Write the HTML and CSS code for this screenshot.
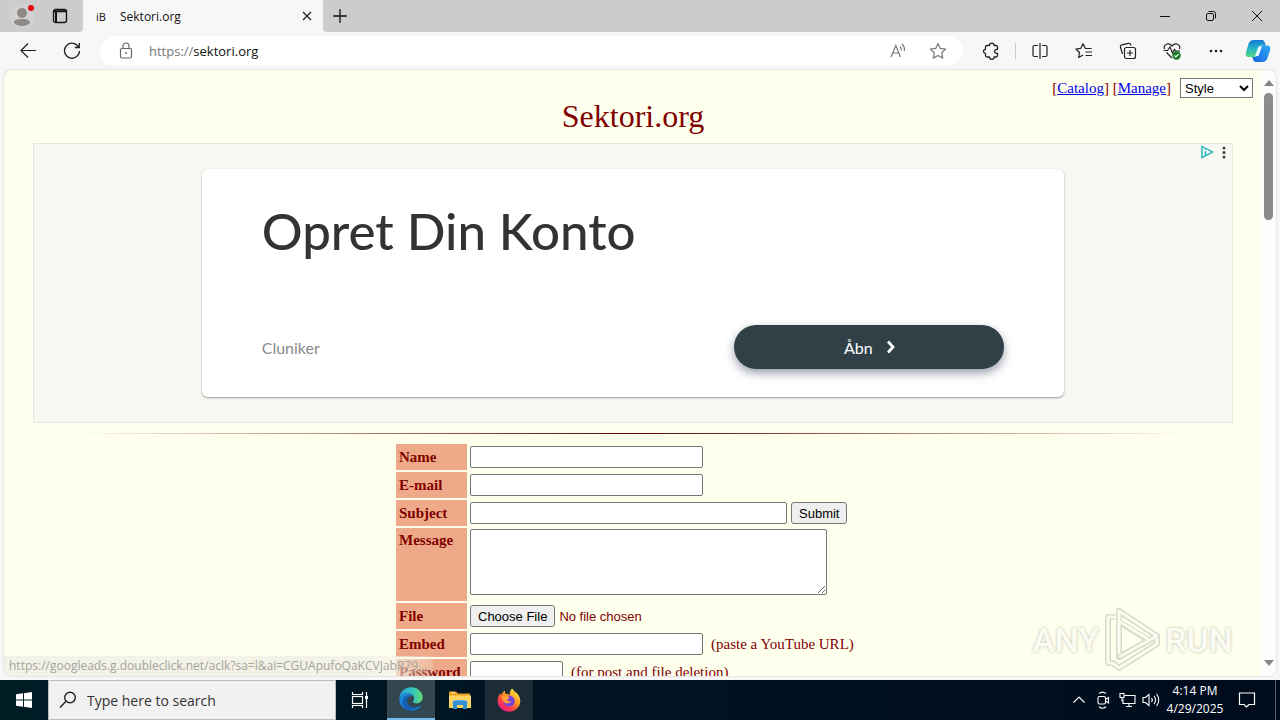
FILE: index.html
```html
<!DOCTYPE html>
<html lang="en">
<head>
	<meta charset="UTF-8">
	<meta name="viewport" content="width=device-width, initial-scale=1.0">
	<title>Sektori.org</title>
	<link rel="stylesheet" href="styles.css">
</head>
<body>

	<!-- tab strip -->
	<header class="tabstrip">
		<div class="tabstrip-left">
			<button class="profile" aria-label="Profile">
				<svg width="28" height="28" viewBox="0 0 28 28"><circle cx="14" cy="14" r="12" fill="#d2d2d2"/><circle cx="14" cy="11" r="5" fill="#8d8a88"/><path d="M6 20.500c0-2.500 3-3.500 8-3.500s8 1 8 3.500c-1 2-4 3.500-8 3.500s-7-1.500-8-3.500z" fill="#8d8a88"/><circle cx="23" cy="6" r="3" fill="#e30613"/></svg>
			</button>
			<button class="tab-actions" aria-label="Tab actions">
				<svg width="16" height="16" viewBox="0 0 16 16" fill="none" stroke="#111" stroke-width="1.3"><rect x="1.5" y="1.5" width="13" height="13" rx="2"/><path d="M1.500 3.200h13M4 4v10.500" stroke-width="2"/></svg>
			</button>
		</div>
		<div class="tab">
			<span class="favicon">iB</span>
			<span class="tab-title">Sektori.org</span>
			<button class="tab-close" aria-label="Close tab">
				<svg width="10" height="10" viewBox="0 0 10 10" stroke="#222" stroke-width="1.3"><path d="M1 1l8 8M9 1l-8 8"/></svg>
			</button>
		</div>
		<div class="tabstrip-rest">
			<button class="new-tab" aria-label="New tab">
				<svg width="14" height="14" viewBox="0 0 14 14" stroke="#111" stroke-width="1.3"><path d="M7 0v14M0 7h14"/></svg>
			</button>
			<div class="win-controls">
				<button aria-label="Minimize"><svg width="12" height="12" viewBox="0 0 12 12"><path d="M1 6.500h10" stroke="#111"/></svg></button>
				<button aria-label="Restore"><svg width="12" height="12" viewBox="0 0 12 12" fill="none" stroke="#111"><rect x="1.500" y="3.500" width="7" height="7" rx="1.500"/><path d="M3.500 1.500h5a2 2 0 0 1 2 2v5"/></svg></button>
				<button aria-label="Close"><svg width="12" height="12" viewBox="0 0 12 12" stroke="#111"><path d="M1 1l10 10M11 1L1 11"/></svg></button>
			</div>
		</div>
	</header>

	<!-- toolbar -->
	<nav class="toolbar">
		<button class="tool" aria-label="Back"><svg width="18" height="18" viewBox="0 0 18 18" fill="none" stroke="#222" stroke-width="1.2"><path d="M17 8.500H2M9 1.500L2 8.500l7 7"/></svg></button>
		<button class="tool" aria-label="Refresh"><svg width="18" height="18" viewBox="0 0 18 18" fill="none" stroke="#222" stroke-width="1.3"><path d="M15.800 5.500A7.500 7.500 0 1 0 16.500 9M16.300 1v4.500h-4.500"/></svg></button>
		<div class="address">
			<svg width="14" height="18" viewBox="0 0 14 18" fill="none" stroke="#666" stroke-width="1.2"><rect x="1.500" y="6.500" width="11" height="9.500" rx="1.500"/><path d="M4 6.500V4a3 3 0 0 1 6 0v2.500"/><circle cx="7" cy="11" r="1" fill="#666" stroke="none"/></svg>
			<a class="url" href="https://sektori.org"><span>https://</span>sektori.org</a>
			<button aria-label="Read aloud"><svg width="18" height="18" viewBox="0 0 18 18" fill="none" stroke="#777" stroke-width="1.2"><path d="M2 15L6.800 3.500 11.500 15M3.700 11h6.200M11 4.500c1 1 1.500 2.500 1.300 4M13 2c2 2 2.800 4.500 2.300 7"/></svg></button>
			<button aria-label="Add to favorites"><svg width="18" height="18" viewBox="0 0 18 18" fill="none" stroke="#777" stroke-width="1.2"><path d="M9 1.500l2.300 4.900 5.300.7-3.900 3.700 1 5.300L9 13.500l-4.700 2.600 1-5.300L1.400 7.100l5.300-.7z" stroke-linejoin="round"/></svg></button>
		</div>
		<button class="tool" aria-label="Extensions"><svg width="18" height="18" viewBox="0 0 18 18" fill="none" stroke="#222" stroke-width="1.3" stroke-linejoin="round"><path d="M5 3.500h2.500a2.300 2.300 0 0 1 4.600 0H14a1.500 1.500 0 0 1 1.500 1.500v2.300h-.8a2 2 0 0 0 0 4h.8v2.200A1.500 1.500 0 0 1 14 15h-1.900a2.300 2.300 0 0 1-4.600 0H5a1.500 1.500 0 0 1-1.500-1.500v-2.200a2 2 0 0 1 0-4V5A1.500 1.500 0 0 1 5 3.500z"/></svg></button>
		<span class="tool-divider"></span>
		<button class="tool" aria-label="Split screen"><svg width="18" height="18" viewBox="0 0 18 18" fill="none" stroke="#222" stroke-width="1.2"><path d="M9 1v16M7 3.500H3.500a1.500 1.500 0 0 0-1.500 1.500v8a1.500 1.500 0 0 0 1.500 1.500H7M11 3.500h3.500A1.500 1.500 0 0 1 16 5v8a1.500 1.500 0 0 1-1.500 1.500H11"/></svg></button>
		<button class="tool" aria-label="Favorites"><svg width="18" height="18" viewBox="0 0 18 18" fill="none" stroke="#222" stroke-width="1.2"><path d="M16.500 6.500h-6L8 1.800 5.800 6.300.9 7l3.600 3.500-.8 5L8 13M10.500 10H17M10.500 13.500H17" stroke-linejoin="round"/></svg></button>
		<button class="tool" aria-label="Collections"><svg width="18" height="18" viewBox="0 0 18 18" fill="none" stroke="#222" stroke-width="1.2"><rect x="5.500" y="5.500" width="11" height="11" rx="2"/><path d="M11 8v6M8 11h6M3.500 12L1.400 5A2 2 0 0 1 2.800 2.800L9.500 1.400a2 2 0 0 1 2.300 1.400l.2.800"/></svg></button>
		<button class="tool" aria-label="Browser essentials"><svg width="18" height="18" viewBox="0 0 18 18" fill="none" stroke="#222" stroke-width="1.2"><path d="M1.500 7C0 2.500 5.500 0 9 4c3.500-4 9-1.500 7.500 3M3.500 10.500L9 16M.5 8.500h4L7 5l2.500 6 2-3.500 1 1.500H17"/><circle cx="13.500" cy="13.500" r="4.200" fill="#187a24" stroke="none"/><path d="M11.500 13.500l1.400 1.400 2.600-2.700" stroke="#fff"/></svg></button>
		<button class="tool" aria-label="Settings and more"><svg width="16" height="4" viewBox="0 0 16 4" fill="#222"><circle cx="3" cy="2" r="1.300"/><circle cx="8" cy="2" r="1.300"/><circle cx="13" cy="2" r="1.300"/></svg></button>
		<button class="tool copilot" aria-label="Copilot">
			<svg width="26" height="24" viewBox="0 0 26 24">
				<defs>
					<linearGradient id="cop1" x1="0" y1="0" x2="0" y2="1"><stop offset="0" stop-color="#1479d6"/><stop offset=".5" stop-color="#27b4c8"/><stop offset="1" stop-color="#58d878"/></linearGradient>
					<linearGradient id="cop2" x1="0" y1="1" x2="1" y2="0"><stop offset="0" stop-color="#1a63e0"/><stop offset="1" stop-color="#2ba8f4"/></linearGradient>
				</defs>
				<path d="M9 1h8c2 0 2.500 1.500 3 3l.8 2.500H17c-2 0-3 1-3.600 3l-1.900 6c-.6 2-1.500 2.500-3 2.500H4c-3 0-3.800-2-3-5L3.500 5C4.300 2.500 6 1 9 1z" fill="url(#cop1)"/>
				<path d="M17.500 6.500H22c3 0 3.800 2 3 5L22.500 19c-.8 2.500-2.500 4-5.500 4h-6c-2 0-2.600-1.500-3-3L7 18h2c2 0 3-.9 3.600-2.700l2-6c.5-1.800 1.200-2.800 2.900-2.800z" fill="url(#cop2)"/>
				<path d="M13.500 7.500h3.500L13.500 17H10z" fill="#e6f7ff"/>
			</svg>
		</button>
	</nav>

	<!-- page -->
	<div class="viewport">
		<main class="page">
			<div class="boardlist">
				<span>[<a href="catalog.html">Catalog</a>] [<a href="manage.html">Manage</a>]</span>
				<select aria-label="Style"><option>Style</option></select>
			</div>
			<h1 class="logo">Sektori.org</h1>

			<div class="ad">
				<div class="ad-marks">
					<svg width="14" height="14" viewBox="0 0 14 14" fill="none" stroke="#18b3bd" stroke-width="1.400"><path d="M2 1.500l10.500 5.500L2 12.500z"/><path d="M5.500 6v4M5.500 3.800v1"/></svg>
					<svg width="4" height="14" viewBox="0 0 4 14" fill="#444"><circle cx="2" cy="3" r="1.500"/><circle cx="2" cy="7.500" r="1.500"/><circle cx="2" cy="12" r="1.500"/></svg>
				</div>
				<div class="ad-card">
					<h2>Opret Din Konto</h2>
					<div class="ad-bottom">
						<span>Cluniker</span>
						<a class="ad-button" href="https://googleads.g.doubleclick.net/aclk">Åbn
							<svg width="8" height="14" viewBox="0 0 8 14" fill="none" stroke="#fff" stroke-width="2.800"><path d="M1 1.500L6 7l-5 5.500"/></svg>
						</a>
					</div>
				</div>
			</div>

			<hr>

			<form class="postform">
				<table>
					<tr>
						<th><label for="name">Name</label></th>
						<td><input type="text" id="name" class="medium"></td>
					</tr>
					<tr>
						<th><label for="email">E-mail</label></th>
						<td><input type="text" id="email" class="medium"></td>
					</tr>
					<tr>
						<th><label for="subject">Subject</label></th>
						<td><div class="field"><input type="text" id="subject" class="long"><button type="button" class="submit">Submit</button></div></td>
					</tr>
					<tr class="message">
						<th><label for="message">Message</label></th>
						<td><textarea id="message"></textarea></td>
					</tr>
					<tr>
						<th><label for="file">File</label></th>
						<td><input type="file" id="file"></td>
					</tr>
					<tr>
						<th><label for="embed">Embed</label></th>
						<td><div class="field wide"><input type="text" id="embed" class="medium"><span>(paste a YouTube URL)</span></div></td>
					</tr>
					<tr>
						<th><label for="password">Password</label></th>
						<td><div class="field wide"><input type="password" id="password" class="short"><span>(for post and file deletion)</span></div></td>
					</tr>
				</table>
			</form>
		</main>
		<div class="scrollbar">
			<svg width="10" height="6" viewBox="0 0 10 6"><path d="M5 0l5 6H0z" fill="#858585"/></svg>
			<div class="thumb"></div>
			<svg width="10" height="6" viewBox="0 0 10 6"><path d="M5 6l5-6H0z" fill="#858585"/></svg>
		</div>

		<div class="status">https://googleads.g.doubleclick.net/aclk?sa=l&amp;ai=CGUApufoQaKCVJabR79...</div>

		<div class="watermark">
			<span>ANY</span>
			<svg width="58" height="64" viewBox="0 0 58 64" fill="none" stroke-linejoin="round">
				<path d="M12 9H5v46h5l6 5 38-24v-8L16 3v46l38-21M16 14l28 17" stroke="#d0d0c2" stroke-width="6"/>
				<path d="M12 9H5v46h5M16 46V3l38 25-38 21M17 14l28 17M10 55l6 5 38-24v-6" stroke="#fbfbf4" stroke-width="3"/>
			</svg>
			<span>RUN</span>
		</div>
	</div>

	<!-- taskbar -->
	<footer class="taskbar">
		<button class="start" aria-label="Start"><svg width="16" height="16" viewBox="0 0 16 16" fill="#fff"><path d="M0 2.300l7-1v6.200H0zM8 1.200L16 0v7.500H8zM0 8.500h7v6.200l-7-1zM8 8.500h8V16l-8-1.200z"/></svg></button>
		<label class="search">
			<svg width="18" height="18" viewBox="0 0 18 18" fill="none" stroke="#222" stroke-width="1.400"><circle cx="11" cy="6.500" r="5.300"/><path d="M7 10.300L1 16.500"/></svg>
			<input type="text" placeholder="Type here to search">
		</label>
		<button class="task" aria-label="Task view"><svg width="18" height="18" viewBox="0 0 18 18" fill="none" stroke="#fff" stroke-width="1.200"><path d="M1.500 1v2.500h10V1M1.500 17v-2.500h10V17M15.500 1v16"/><rect x="1.500" y="5.500" width="10" height="7"/><path d="M14 5h3v3h-3z" fill="#fff" stroke="none"/></svg></button>
		<div class="pinned">
			<button class="task active" aria-label="Edge">
				<svg width="24" height="24" viewBox="0 0 24 24">
					<defs>
						<linearGradient id="edge1" x1="0" y1="0" x2="1" y2="0"><stop offset="0" stop-color="#22a5df"/><stop offset=".6" stop-color="#35c5b8"/><stop offset="1" stop-color="#5fdc72"/></linearGradient>
						<linearGradient id="edge2" x1="0" y1="0" x2="0" y2="1"><stop offset="0" stop-color="#1d8fdb"/><stop offset="1" stop-color="#1377d4"/></linearGradient>
					</defs>
					<path d="M.300 11C1.200 4.500 6 .3 12 .3c7 0 11.700 5 11.700 10 0 3.500-2.600 6-6 6-2.500 0-3.700-.8-3.700-1.600 0-.8 1.200-1.200 1.200-3.200C15.200 8.600 12 6.300 8.300 6.300 4.500 6.300 1.300 8.300.300 11z" fill="url(#edge1)"/>
					<path d="M.300 11c1-2.800 4.200-4.700 8-4.700 2.400 0 4.200 1 5.200 2.200-2.500-.3-5.500 2-5.500 5.500 0 4.500 4.500 7.500 9 6.500 1.600-.3 3-1 4.400-1.800.5-.2.800.2.500.6-2 2.900-5.500 4.500-9.900 4.500C5.500 23.800-.500 18.500.300 11z" fill="url(#edge2)"/>
					<path d="M13.500 8.500C11 8 8 10.500 8 14c0 4.500 4.500 7.500 9 6.500-3.500 3-8.500 3.500-11.500.5-3.500-3.500-2.500-10.500 2-12.500 2.500-1.200 5-.8 6 0z" fill="#1557a8" opacity=".75"/>
				</svg>
			</button>
			<button class="task" aria-label="File Explorer"><svg width="22" height="20" viewBox="0 0 22 20"><path d="M0 1.500h7l2 2h12v5H0z" fill="#e8a11d"/><path d="M2 2.800h4" stroke="#fff2c4"/><path d="M0 5.500h22V18H0z" fill="#ffd462"/><path d="M4 19v-6.500A2 2 0 0 1 6 10.500h10a2 2 0 0 1 2 2V19h-4v-4H8v4z" fill="#368fd0"/><path d="M4 14.500v-2A2 2 0 0 1 6 10.500h10a2 2 0 0 1 2 2v2" fill="none" stroke="#5fb0e6"/></svg></button>
			<button class="task open" aria-label="Firefox">
				<svg width="24" height="24" viewBox="0 0 24 24">
					<defs>
						<linearGradient id="fox" x1=".85" y1=".05" x2=".2" y2=".95"><stop offset="0" stop-color="#fff04a"/><stop offset=".4" stop-color="#ff9a1f"/><stop offset=".7" stop-color="#ff4444"/><stop offset="1" stop-color="#e31587"/></linearGradient>
					</defs>
					<path d="M15 .5c1.500 1.200 2.500 2.800 3 4.500 0-.700 0-1.300-.2-1.800C21 5.500 23.500 9.500 23.300 13.500 23 19.300 18 23.700 12 23.700S.600 19.200.6 13c0-3.200 1.200-6 3-7.800 0 1 .2 1.700.5 2.200.8-2.200 2.200-4 3.900-5-.3 1.200 0 2.500.8 3.600 2 .3 3.200.3 4.200 1.200C12.500 5 13.200 2.500 15 .5z" fill="url(#fox)"/>
					<path d="M12 7.500c3 0 5.700 2.300 5.700 5.500S15 18.500 12 18.500 6.500 16.200 6.500 13c0-1 .4-2 1-2.700 1 .4 2 .3 3-.1z" fill="#7542e5"/>
					<path d="M5 8.500c2-1 4-.8 5.500.5h2.200c-.4 1.500-2.200 1.800-2.400 2.700 0 1.800 2.700 2.300 4.200.8-.8 3-4.500 4-7 2C6 13 5 11 5 8.500z" fill="#ffa032"/>
				</svg>
			</button>
		</div>

		<div class="tray">
			<button aria-label="Show hidden icons"><svg width="12" height="12" viewBox="0 0 12 12" fill="none" stroke="#fff" stroke-width="1.200"><path d="M.500 8.500L6 3l5.500 5.500"/></svg></button>
			<button aria-label="Meet now"><svg width="14" height="18" viewBox="0 0 14 18" fill="none" stroke="#fff" stroke-width="1.100"><rect x="2" y="5.500" width="7.500" height="7.500" rx="1.500"/><path d="M9.500 8.500l3-2v5.500l-3-2M3 2.500c2-1.600 5-1.600 7 0M3 15.800c2 1.600 5 1.600 7 0"/></svg></button>
			<button aria-label="Network"><svg width="17" height="16" viewBox="0 0 17 16" fill="none" stroke="#fff" stroke-width="1.100"><path d="M5.500 3.500h10.500v8H4V7M7 14.500h6M10 11.500v3"/><rect x="1" y="1.500" width="4" height="4"/><path d="M3 5.500v4"/></svg></button>
			<button aria-label="Volume"><svg width="18" height="16" viewBox="0 0 18 16" fill="none" stroke="#fff" stroke-width="1.100"><path d="M1 5.500h2.500L7 2.500v11L3.500 10.500H1zM9.500 6c1 1.200 1 2.800 0 4M12 4c2 2.500 2 5.500 0 8M14.500 2c3 3.500 3 8.500 0 12"/></svg></button>
			<div class="clock"><span>4:14 PM</span><span>4/29/2025</span></div>
			<button class="notify" aria-label="Notifications"><svg width="18" height="18" viewBox="0 0 18 18" fill="none" stroke="#fff" stroke-width="1.200"><path d="M1.500 2h15v11.500H11L8.500 16 6 13.500H1.500z"/></svg></button>
			<span class="show-desktop"></span>
		</div>
	</footer>

</body>
</html>
```

FILE: styles.css
```css
* {
	box-sizing: border-box;
}

body {
	margin: 0;
	height: 100vh;
	display: flex;
	flex-direction: column;
	overflow: hidden;
	background: #f7f7f7;
	font-family: "Open Sans", "Noto Sans", sans-serif;
	font-size: 12px;
	color: #111;
}

header button,
nav button,
footer button {
	display: flex;
	align-items: center;
	justify-content: center;
	border: 0;
	padding: 0;
	background: none;
}

/* Tab strip */
.tabstrip {
	display: flex;
	height: 32px;
	flex-shrink: 0;
}

.tabstrip-left {
	display: flex;
	align-items: center;
	width: 83px;
	background: #ccc;
	border-radius: 0 0 4px 0;
}

.profile {
	width: 44px;
}

.tab-actions {
	width: 32px;
}

.tab {
	display: flex;
	align-items: center;
	width: 240px;
	padding: 0 8px 0 13px;
}

.favicon {
	width: 24px;
	font-size: 11px;
}

.tab-title {
	flex: 1;
}

.tab-close {
	width: 16px;
	height: 16px;
}

.tabstrip-rest {
	flex: 1;
	display: flex;
	justify-content: space-between;
	background: #ccc;
	border-radius: 0 0 0 4px;
}

.new-tab {
	width: 34px;
}

.win-controls {
	display: flex;
}

.win-controls button {
	width: 46px;
}

/* Toolbar */
.toolbar {
	display: flex;
	align-items: center;
	height: 38px;
	flex-shrink: 0;
	padding: 0 2px 0 6px;
}

.tool {
	width: 44px;
	height: 30px;
}

.address {
	flex: 1;
	display: flex;
	align-items: center;
	height: 30px;
	margin: 0 6px;
	padding: 0 5px 0 19px;
	border-radius: 15px;
	background: #fff;
}

.address button {
	width: 40px;
	height: 30px;
}

.url {
	flex: 1;
	margin-left: 16px;
	font-size: 13px;
	color: #111;
	text-decoration: none;
}

.url span {
	color: #777;
}

.tool-divider {
	width: 1px;
	height: 16px;
	margin: 0 2px;
	background: #ccc;
}

.copilot {
	width: 40px;
}

/* Page area */
.viewport {
	position: relative;
	flex: 1;
	min-height: 0;
	display: flex;
	margin: 0 4px 4px;
	overflow: hidden;
	border-radius: 8px;
	background: #ffe;
	box-shadow: 0 0 2px #bbb;
}

.page {
	flex: 1;
	padding: 8px 8px 0 9px;
	overflow: hidden;
	font-family: "Liberation Serif", serif;
	font-size: 15px;
	color: #800000;
}

.page input,
.page select,
.page textarea,
.page button {
	font-family: "Liberation Sans", sans-serif;
	font-size: 13px;
}

.boardlist {
	display: flex;
	justify-content: flex-end;
	align-items: center;
	gap: 9px;
	height: 20px;
}

.boardlist a {
	color: #0000ee;
}

.boardlist select {
	width: 73px;
	height: 20px;
	border: 1px solid #767676;
	background: #fff;
}

.logo {
	margin: 0 0 9px;
	font-size: 32px;
	font-weight: normal;
	line-height: 36px;
	text-align: center;
}

/* Advert */
.ad {
	position: relative;
	max-width: 1200px;
	margin: 0 auto;
	padding: 25px 0;
	border: 1px solid #e8e6df;
	background: #f9f7f2;
	font-family: Lato, sans-serif;
}

.ad-marks {
	position: absolute;
	top: 1px;
	right: 6px;
	display: flex;
	gap: 8px;
}

.ad-card {
	display: flex;
	flex-direction: column;
	justify-content: space-between;
	width: 72%;
	height: 228px;
	margin: 0 auto;
	padding: 32px 60px 28px;
	border-radius: 6px;
	background: #fff;
	box-shadow: 0 1px 2px #999;
}

.ad-card h2 {
	margin: 0;
	font-size: 51px;
	font-weight: 500;
	line-height: 60px;
	color: #333;
}

.ad-bottom {
	display: flex;
	justify-content: space-between;
	align-items: center;
	font-size: 16px;
	color: #8a8a8a;
}

.ad-button {
	display: flex;
	align-items: center;
	justify-content: center;
	gap: 14px;
	width: 270px;
	height: 44px;
	border-radius: 22px;
	background: #314047;
	box-shadow: 0 4px 10px rgba(50, 60, 90, 0.5);
	color: #fff;
	text-decoration: none;
}

.page hr {
	height: 1px;
	margin: 10px 0 8px;
	border: 0;
	background: linear-gradient(to right, rgba(96, 0, 0, 0) 5%, #600000 50%, rgba(96, 0, 0, 0) 95%);
}

/* Post form */
.postform table {
	margin: 0 auto;
	border-spacing: 2px;
}

.postform tr {
	height: 26px;
}

.postform th {
	width: 71px;
	padding: 0 3px;
	background: #ea8;
	text-align: left;
}

.postform td {
	width: 401px;
	padding: 0 1px;
}

.postform .message {
	height: 73px;
}

.message th {
	padding-top: 4px;
	vertical-align: top;
}

.message td {
	padding-top: 1px;
	vertical-align: top;
}

.postform input {
	display: block;
	height: 22px;
}

.postform input[type="text"],
.postform input[type="password"],
.postform textarea {
	border: 1px solid #767676;
	border-radius: 2px;
	background: #fff;
}

.postform .medium {
	width: 233px;
}

.postform .long {
	width: 317px;
}

.postform .short {
	width: 93px;
}

.postform textarea {
	display: block;
	width: 357px;
	height: 66px;
}

.field {
	display: flex;
	align-items: center;
	gap: 4px;
}

.wide {
	gap: 8px;
}

.submit,
input::file-selector-button {
	height: 22px;
	padding: 0 7px;
	border: 1px solid #767676;
	border-radius: 3px;
	background: #efefef;
	font-family: "Liberation Sans", sans-serif;
	font-size: 13px;
	color: #000;
}

/* Scrollbar */
.scrollbar {
	display: flex;
	flex-direction: column;
	align-items: center;
	width: 15px;
	padding: 10px 0;
	background: #fcfcfc;
}

.thumb {
	width: 9px;
	height: 127px;
	margin: 7px 0 auto;
	border-radius: 5px;
	background: #8b8b8b;
}

/* Link preview in the corner */
.status {
	position: absolute;
	left: 0;
	bottom: 0;
	padding: 0 5px;
	line-height: 20px;
	font-size: 12px;
	color: #a3a39c;
	background: linear-gradient(to right, #f3f2e6 85%, rgba(243, 242, 230, 0.2));
}

.watermark {
	position: absolute;
	right: 43px;
	bottom: 4px;
	display: flex;
	align-items: center;
	gap: 4px;
	font-family: Roboto, sans-serif;
	font-size: 34px;
	font-weight: 500;
	color: #fbfbf4;
	text-shadow: 0 0 3px #a8a89c;
	opacity: 0.8;
}

/* Taskbar */
.taskbar {
	display: flex;
	height: 40px;
	flex-shrink: 0;
	background: linear-gradient(to right, #001c25, #000b1c);
	color: #fff;
}

.start,
.task {
	width: 48px;
}

.search {
	display: flex;
	align-items: center;
	gap: 10px;
	width: 288px;
	padding-left: 10px;
	border: 1px solid #bbb;
	background: #f1f1f1;
}

.search input {
	flex: 1;
	border: 0;
	padding: 0;
	outline: 0;
	background: none;
	font-family: "Open Sans", sans-serif;
	font-size: 14px;
}

.search input::placeholder {
	color: #333;
}

.pinned {
	display: flex;
	gap: 1px;
	margin-left: 3px;
}

.taskbar .active {
	border-bottom: 2px solid #76b9ed;
	background: #33474f;
}

.taskbar .open {
	background: #1c2c36;
}

.tray {
	display: flex;
	margin-left: auto;
}

.tray button {
	width: 24px;
}

.clock {
	display: flex;
	flex-direction: column;
	align-items: center;
	justify-content: center;
	width: 64px;
	line-height: 18px;
	font-size: 12px;
}

.tray .notify {
	width: 40px;
}

.show-desktop {
	width: 5px;
	margin-left: 8px;
	border-left: 1px solid #56606a;
}
```
